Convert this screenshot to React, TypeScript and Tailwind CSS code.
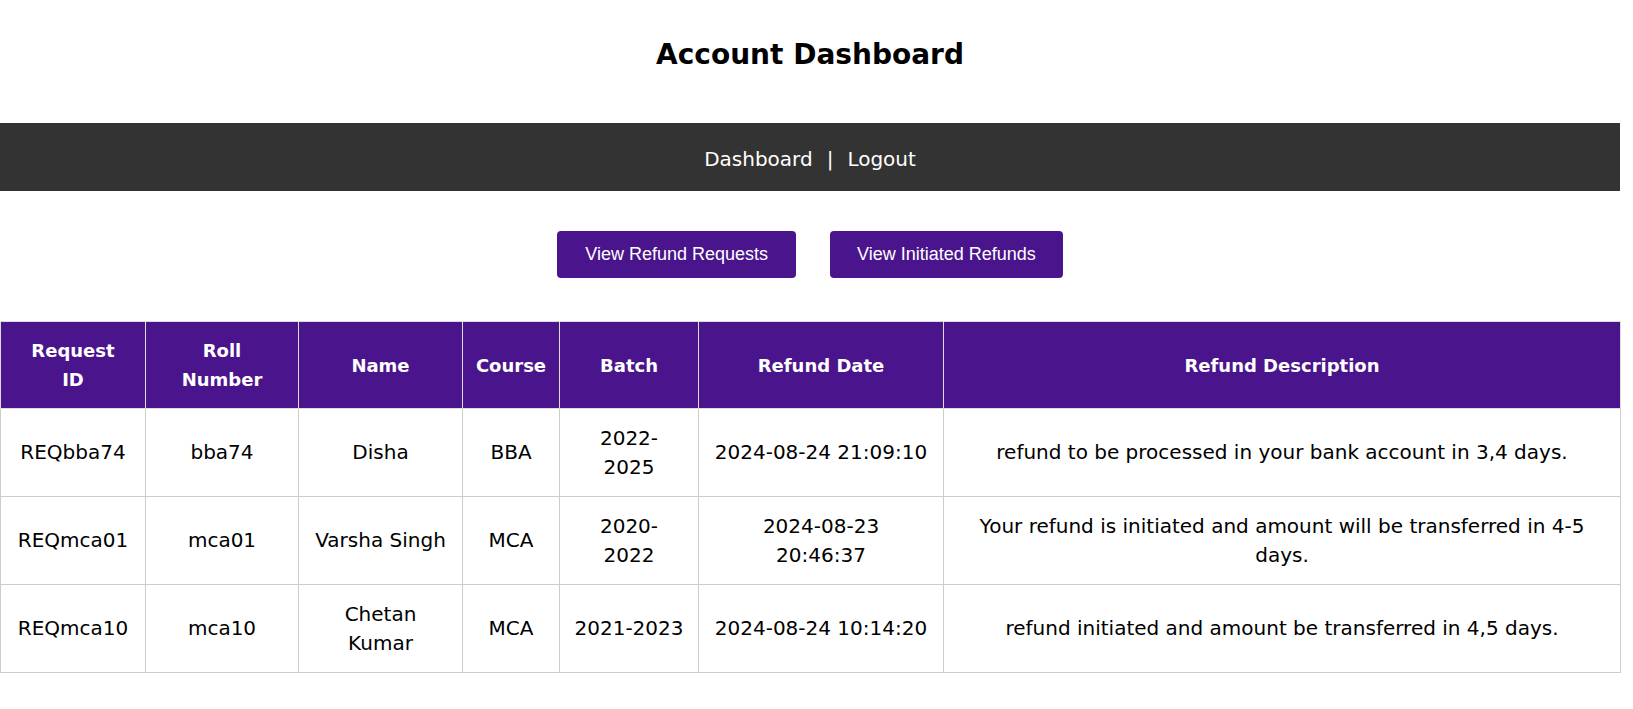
import React from "react";

const rows = [
  { id: "REQbba74", roll: "bba74", name: ["Disha"], course: "BBA", batch: ["2022-", "2025"], date: ["2024-08-24 21:09:10"], desc: ["refund to be processed in your bank account in 3,4 days."] },
  { id: "REQmca01", roll: "mca01", name: ["Varsha Singh"], course: "MCA", batch: ["2020-", "2022"], date: ["2024-08-23", "20:46:37"], desc: ["Your refund is initiated and amount will be transferred in 4-5", "days."] },
  { id: "REQmca10", roll: "mca10", name: ["Chetan", "Kumar"], course: "MCA", batch: ["2021-2023"], date: ["2024-08-24 10:14:20"], desc: ["refund initiated and amount be transferred in 4,5 days."] },
];

function Lines({ parts }: { parts: string[] }) {
  return (
    <>
      {parts.map((p, i) => (
        <div key={i}>{p}</div>
      ))}
    </>
  );
}

export default function App() {
  const th = "border border-[#ddd] px-[8px] font-bold text-white text-[18px] leading-[29px]";
  const td = "border border-[#ccc] px-[8px] text-[20px] leading-[29px]";
  return (
    <div className="w-[1620px] bg-white text-black font-['Comic_Sans_MS','DejaVu_Sans',sans-serif]">
      <div className="h-[123px] pt-[36px]">
        <h1 className="text-center text-[28px] font-bold leading-[38px]">Account Dashboard</h1>
      </div>

      <div className="h-[68px] bg-[#333] flex items-center justify-center gap-[14px] text-white text-[20px] pt-[4px]">
        <span>Dashboard</span>
        <span>|</span>
        <span>Logout</span>
      </div>

      <div className="flex justify-center gap-[34px] mt-[40px] font-['Liberation_Sans',Arial,sans-serif]">
        <button className="h-[47px] px-[28px] rounded-[4px] bg-[#4a148c] text-white text-[18px]">View Refund Requests</button>
        <button className="h-[47px] px-[27px] rounded-[4px] bg-[#4a148c] text-white text-[18px]">View Initiated Refunds</button>
      </div>

      <table className="mt-[43px] w-[1620px] table-fixed border-collapse text-center">
        <colgroup>
          <col className="w-[145px]" />
          <col className="w-[153px]" />
          <col className="w-[164px]" />
          <col className="w-[97px]" />
          <col className="w-[139px]" />
          <col className="w-[245px]" />
          <col className="w-[677px]" />
        </colgroup>
        <thead>
          <tr className="bg-[#4a148c] h-[87px]">
            <th className={th}><Lines parts={["Request", "ID"]} /></th>
            <th className={th}><Lines parts={["Roll", "Number"]} /></th>
            <th className={th}>Name</th>
            <th className={th}>Course</th>
            <th className={th}>Batch</th>
            <th className={th}>Refund Date</th>
            <th className={th}>Refund Description</th>
          </tr>
        </thead>
        <tbody>
          {rows.map((r) => (
            <tr key={r.id} className="h-[88px]">
              <td className={td}>{r.id}</td>
              <td className={td}>{r.roll}</td>
              <td className={td}><Lines parts={r.name} /></td>
              <td className={td}>{r.course}</td>
              <td className={td}><Lines parts={r.batch} /></td>
              <td className={td}><Lines parts={r.date} /></td>
              <td className={td}><Lines parts={r.desc} /></td>
            </tr>
          ))}
        </tbody>
      </table>
    </div>
  );
}
